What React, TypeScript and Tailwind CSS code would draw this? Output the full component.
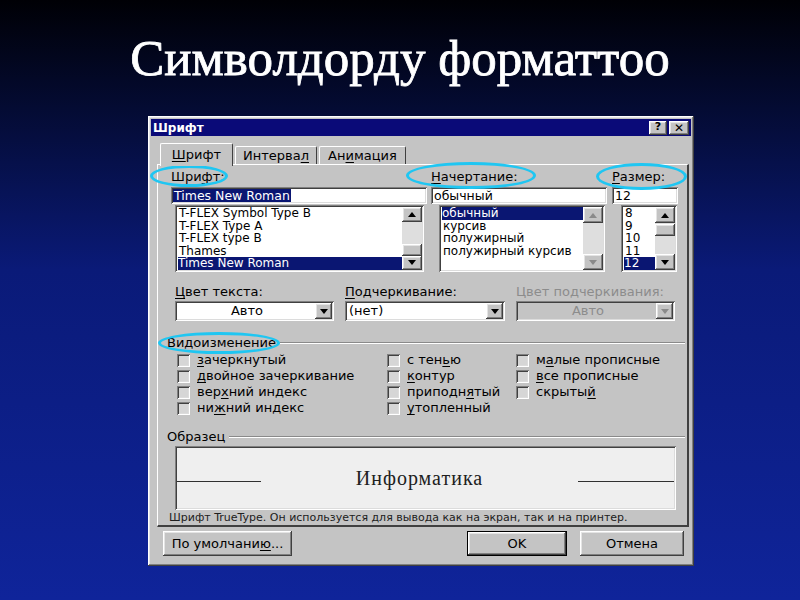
import React from 'react';

const ui: React.CSSProperties = { fontFamily: '"DejaVu Sans", Verdana, sans-serif' };
const serif: React.CSSProperties = { fontFamily: '"Liberation Serif", "Times New Roman", serif' };

// classic 3D bevels
const raised =
  'shadow-[inset_-1px_-1px_#404040,inset_1px_1px_#ffffff,inset_-2px_-2px_#808080,inset_2px_2px_#e4e4e4]';
const sunken =
  'shadow-[inset_1px_1px_#808080,inset_-1px_-1px_#ffffff,inset_2px_2px_#404040,inset_-2px_-2px_#dcdcdc]';

const U: React.FC<{ children: React.ReactNode }> = ({ children }) => (
  <span className="underline underline-offset-2">{children}</span>
);

const Arrow: React.FC<{ dir: 'up' | 'down'; disabled?: boolean }> = ({ dir, disabled }) => (
  <svg width="8" height="5" viewBox="0 0 8 5">
    <polygon
      points={dir === 'up' ? '4,0 8,5 0,5' : '0,0 8,0 4,5'}
      fill={disabled ? '#8a8a8a' : '#000000'}
    />
  </svg>
);

const ArrowButton: React.FC<{ dir: 'up' | 'down'; disabled?: boolean }> = ({ dir, disabled }) => (
  <div className={`h-[16px] flex items-center justify-center bg-[#c4c4c4] ${raised}`}>
    <Arrow dir={dir} disabled={disabled} />
  </div>
);

const ScrollBar: React.FC<{ thumbAt?: number; disabled?: boolean }> = ({ thumbAt, disabled }) => (
  <div className="w-[20px] flex flex-col bg-[#dedede]">
    <ArrowButton dir="up" disabled={disabled} />
    <div className="flex-1">
      {thumbAt !== undefined && (
        <div style={{ marginTop: thumbAt }} className={`h-[12px] bg-[#c4c4c4] ${raised}`} />
      )}
    </div>
    <ArrowButton dir="down" disabled={disabled} />
  </div>
);

const ListBox: React.FC<{
  items: string[];
  selected: number;
  width: number;
  thumbAt?: number;
  disabled?: boolean;
}> = ({ items, selected, width, thumbAt, disabled }) => (
  <div style={{ width }} className={`h-[67px] bg-white p-[2px] flex ${sunken}`}>
    <div className="flex-1 pl-[1px]">
      {items.map((it, i) => (
        <div key={it} className="h-[12.6px] leading-[12.6px] text-[12px] text-black whitespace-nowrap">
          <span className={i === selected ? 'bg-[#0a1672] text-white block pr-[2px]' : 'pl-[1px]'}>
            {it}
          </span>
        </div>
      ))}
    </div>
    <ScrollBar thumbAt={thumbAt} disabled={disabled} />
  </div>
);

const Combo: React.FC<{ value: string; center?: boolean; disabled?: boolean }> = ({
  value,
  center,
  disabled,
}) => (
  <div className={`h-[20px] p-[2px] flex ${disabled ? 'bg-[#c4c4c4]' : 'bg-white'} ${sunken}`}>
    <div
      className={`flex-1 text-[13px] leading-[16px] pl-[2px] ${center ? 'text-center' : ''} ${
        disabled ? 'text-[#8c8c8c]' : 'text-black'
      }`}
    >
      {value}
    </div>
    <div className={`w-[17px] flex items-center justify-center bg-[#c4c4c4] ${raised}`}>
      <Arrow dir="down" disabled={disabled} />
    </div>
  </div>
);

const Check: React.FC<{ children: React.ReactNode }> = ({ children }) => (
  <div className="h-[16px] flex items-center text-[13px] text-black whitespace-nowrap">
    <div className={`w-[13px] h-[13px] shrink-0 bg-[#d6d6d6] ${sunken}`} />
    <span className="ml-[7px]">{children}</span>
  </div>
);

const GroupTitle: React.FC<{ label: string }> = ({ label }) => (
  <div className="flex items-center h-[14px] text-[13px] text-black">
    <span className="pr-[4px]">{label}</span>
    <div className="flex-1 h-[2px] border-t border-t-[#8a8a8a] border-b border-b-white mr-[2px]" />
  </div>
);

const Button: React.FC<{ children: React.ReactNode; width: number; isDefault?: boolean }> = ({
  children,
  width,
  isDefault,
}) => (
  <div style={{ width }} className={`h-[25px] ${isDefault ? 'border border-black' : ''}`}>
    <div
      className={`h-full flex items-center justify-center text-[13px] text-black bg-[#c4c4c4] ${raised}`}
    >
      {children}
    </div>
  </div>
);

const Ring: React.FC<{ l: number; t: number; w: number; h: number }> = ({ l, t, w, h }) => (
  <div
    style={{ left: l, top: t, width: w, height: h }}
    className="absolute rounded-[50%] border-[3px] border-[#1fc6f2]"
  />
);

export default function App() {
  return (
    <div className="relative w-[800px] h-[600px] overflow-hidden bg-[linear-gradient(180deg,#000005_0%,#040b33_18%,#0a1a78_45%,#0f249a_100%)]">
      <h1 style={serif} className="pt-[30px] h-[85px] text-center text-white text-[51px] leading-[56px] [-webkit-text-stroke:0.8px_#ffffff]">
        Символдорду форматтоо
      </h1>

      {/* font dialog */}
      <div style={ui} className={`ml-[148px] mt-[31px] w-[546px] h-[450px] bg-[#c4c4c4] p-[3px] flex flex-col ${raised}`}>
        <div className="h-[17px] bg-[#0a0a78] flex items-center pl-[2px] pr-[2px]">
          <span className="text-white font-bold text-[12px] flex-1">Шрифт</span>
          <div className={`w-[18px] h-[14px] bg-[#c4c4c4] flex items-center justify-center text-[11px] font-bold text-black ${raised}`}>?</div>
          <div className={`ml-[2px] w-[20px] h-[14px] bg-[#c4c4c4] flex items-center justify-center text-[12px] font-bold text-black ${raised}`}>✕</div>
        </div>

        {/* tabs */}
        <div className="mt-[7px] ml-[6px] h-[21px] flex items-end">
          <div className="relative z-10 -mb-[2px] ml-[3px] w-[73px] h-[23px] bg-[#c4c4c4] border-t border-l border-r border-t-white border-l-white border-r-[#404040] rounded-t-[2px] flex items-center justify-center text-[13px] text-black">
            <span><U>Ш</U>рифт</span>
          </div>
          <div className="ml-[2px] w-[82px] h-[18px] bg-[#c4c4c4] border-t border-l border-r border-t-white border-l-white border-r-[#404040] rounded-t-[2px] flex items-center justify-center text-[13px] text-black">
            <span>Интерва<U>л</U></span>
          </div>
          <div className="ml-[2px] w-[87px] h-[18px] bg-[#c4c4c4] border-t border-l border-r border-t-white border-l-white border-r-[#404040] rounded-t-[2px] flex items-center justify-center text-[13px] text-black">
            <span>Ан<U>и</U>мация</span>
          </div>
        </div>

        {/* tab page */}
        <div className="ml-[6px] w-[532px] h-[363px] border-t border-l border-t-white border-l-white border-r-2 border-b-2 border-r-[#404040] border-b-[#404040] pl-[12px] pt-[5px] text-black">
          <div className="flex">
            <div className="w-[256px] ml-[1px]">
              <div className="h-[14px] text-[13px] leading-[14px]">Шри<U>ф</U>т:</div>
              <div className={`mt-[3px] h-[17px] bg-white p-[2px] ${sunken}`}>
                <span className="bg-[#0a1672] text-white text-[12.5px] leading-[13px] px-[1px] block w-fit">Times New Roman</span>
              </div>
              <div className="mt-[1px] ml-[4px]">
                <ListBox
                  width={249}
                  selected={4}
                  thumbAt={22}
                  items={['T-FLEX Symbol Type B', 'T-FLEX Type A', 'T-FLEX type B', 'Thames', 'Times New Roman']}
                />
              </div>
            </div>
            <div className="w-[176px] ml-[4px]">
              <div className="h-[14px] text-[13px] leading-[14px]"><U>Н</U>ачертание:</div>
              <div className={`mt-[3px] h-[17px] bg-white p-[2px] pl-[3px] text-[12.5px] leading-[13px] ${sunken}`}>обычный</div>
              <div className="mt-[1px] ml-[8px]">
                <ListBox
                  width={166}
                  selected={0}
                  disabled
                  items={['обычный', 'курсив', 'полужирный', 'полужирный курсив']}
                />
              </div>
            </div>
            <div className="w-[66px] ml-[5px]">
              <div className="h-[14px] text-[13px] leading-[14px]"><U>Р</U>азмер:</div>
              <div className={`mt-[3px] h-[17px] bg-white p-[2px] pl-[3px] text-[12.5px] leading-[13px] ${sunken}`}>12</div>
              <div className="mt-[1px] ml-[9px]">
                <ListBox width={56} selected={4} thumbAt={1} items={['8', '9', '10', '11', '12']} />
              </div>
            </div>
          </div>

          {/* colour / underline */}
          <div className="mt-[13px] ml-[5px] flex gap-[11px] text-[13px]">
            <div className="w-[159px]">
              <div className="h-[14px] leading-[14px]"><U>Ц</U>вет текста:</div>
              <div className="mt-[2px]"><Combo value="Авто" center /></div>
            </div>
            <div className="w-[160px]">
              <div className="h-[14px] leading-[14px]"><U>П</U>одчеркивание:</div>
              <div className="mt-[2px]"><Combo value="(нет)" /></div>
            </div>
            <div className="w-[159px]">
              <div className="h-[14px] leading-[14px] text-[#8c8c8c] whitespace-nowrap">Цвет подчеркивания:</div>
              <div className="mt-[2px]"><Combo value="Авто" center disabled /></div>
            </div>
          </div>

          {/* effects */}
          <div className="mt-[15px] -ml-[3px]">
            <GroupTitle label="Видоизменение" />
          </div>
          <div className="mt-[2px] ml-[7px] flex">
            <div className="w-[210px]">
              <Check><U>з</U>ачеркнутый</Check>
              <Check><U>д</U>войное зачеркивание</Check>
              <Check>вер<U>х</U>ний индекс</Check>
              <Check>ни<U>ж</U>ний индекс</Check>
            </div>
            <div className="w-[129px]">
              <Check>с тен<U>ь</U>ю</Check>
              <Check><U>к</U>онтур</Check>
              <Check>приподн<U>я</U>тый</Check>
              <Check><U>у</U>топленный</Check>
            </div>
            <div>
              <Check>м<U>а</U>лые прописные</Check>
              <Check><U>в</U>се прописные</Check>
              <Check>скрыты<U>й</U></Check>
            </div>
          </div>

          {/* sample */}
          <div className="mt-[14px] -ml-[3px]">
            <GroupTitle label="Образец" />
          </div>
          <div className={`mt-[2px] ml-[5px] w-[501px] h-[64px] bg-[#efefef] p-[2px] flex items-center ${sunken}`}>
            <div className="w-[84px] h-[1px] bg-[#303030] mt-[6px]" />
            <div style={serif} className="flex-1 text-center text-[20px] tracking-[1px] text-[#202020]">Информатика</div>
            <div className="w-[96px] h-[1px] bg-[#303030] mt-[6px]" />
          </div>
          <div className="mt-[1px] -ml-[1px] text-[11px] leading-[13px] text-[#202020] whitespace-nowrap">
            Шрифт TrueType. Он используется для вывода как на экран, так и на принтер.
          </div>
        </div>

        {/* buttons */}
        <div className="mt-[4px] ml-[12px] flex">
          <Button width={129}>
            <span>По умолчани<U>ю</U>...</span>
          </Button>
          <div className="ml-[175px]">
            <Button width={100} isDefault>OK</Button>
          </div>
          <div className="ml-[13px]">
            <Button width={104}>Отмена</Button>
          </div>
        </div>
      </div>

      {/* highlight rings */}
      <Ring l={150} t={165} w={78} h={22} />
      <Ring l={406} t={162} w={130} h={27} />
      <Ring l={596} t={163} w={91} h={27} />
      <Ring l={158} t={332} w={122} h={22} />
    </div>
  );
}
